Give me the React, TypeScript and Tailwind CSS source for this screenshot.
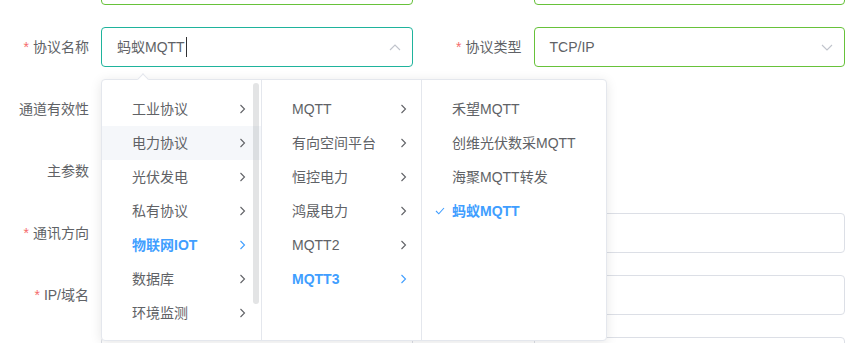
import React from 'react';

// Form with an open cascader panel (element-ui look)

const Chevron = ({ className = '' }: { className?: string }) => (
  <svg width="7" height="10" viewBox="0 0 7 10" className={className} fill="none">
    <path d="M1.5 1 L5.5 5 L1.5 9" stroke="currentColor" strokeWidth="1.1" />
  </svg>
);

const Arrow = ({ up }: { up?: boolean }) => (
  <svg width="12" height="7" viewBox="0 0 12 7" fill="none" className="text-[#c0c4cc]">
    <path d={up ? 'M1 6 L6 1 L11 6' : 'M1 1 L6 6 L11 1'} stroke="currentColor" strokeWidth="1.1" />
  </svg>
);

function Label({ text, required }: { text?: string; required?: boolean }) {
  return (
    <div className="w-[101px] shrink-0 pr-3 text-right text-sm text-[#606266]">
      {required && <span className="text-[#f56c6c] mr-1">*</span>}
      {text}
    </div>
  );
}

function Input({ border = 'border-[#dcdfe6]', children }: { border?: string; children?: React.ReactNode }) {
  return (
    <div className={`flex-1 h-10 border rounded bg-white flex items-center pl-[15px] pr-[11px] text-sm text-[#606266] ${border}`}>
      {children}
    </div>
  );
}

const col1 = ['工业协议', '电力协议', '光伏发电', '私有协议', '物联网IOT', '数据库', '环境监测'];
const col2 = ['MQTT', '有向空间平台', '恒控电力', '鸿晟电力', 'MQTT2', 'MQTT3'];
const col3 = ['禾望MQTT', '创维光伏数采MQTT', '海聚MQTT转发', '蚂蚁MQTT'];

export default function App() {
  return (
    <div className="relative w-[852px] h-[343px] overflow-hidden bg-white font-['Liberation_Sans','Noto_Sans_CJK_SC',sans-serif]">
      <div className="mt-[-35px] pr-[7px] flex flex-col gap-[22px]">
        {/* row 0 (cut off) */}
        <div className="grid grid-cols-2 gap-x-5">
          <div className="flex items-center">
            <Label />
            <Input border="border-[#67c23a]" />
          </div>
          <div className="flex items-center">
            <Label />
            <Input border="border-[#67c23a]" />
          </div>
        </div>

        <div className="grid grid-cols-2 gap-x-5">
          <div className="flex items-center">
            <Label text="协议名称" required />
            <Input border="border-[#1fb39c]">
              <span className="flex-1 flex items-center">
                蚂蚁MQTT
                <span className="inline-block w-px h-[20px] bg-[#303133] ml-px" />
              </span>
              <Arrow up />
            </Input>
          </div>
          <div className="flex items-center">
            <Label text="协议类型" required />
            <Input border="border-[#67c23a]">
              <span className="flex-1">TCP/IP</span>
              <Arrow />
            </Input>
          </div>
        </div>

        <div className="flex items-center h-10">
          <Label text="通道有效性" />
        </div>

        <div className="flex items-center h-10">
          <Label text="主参数" />
        </div>

        <div className="flex items-center">
          <Label text="通讯方向" required />
          <Input />
        </div>

        <div className="flex items-center">
          <Label text="IP/域名" required />
          <Input />
        </div>

        <div className="grid grid-cols-2 gap-x-5">
          <div className="flex items-center">
            <Label />
            <Input />
          </div>
          <div className="flex items-center">
            <Label />
            <Input />
          </div>
        </div>
      </div>

      {/* cascader dropdown */}
      <div className="absolute left-[101px] top-[79px] h-[262px] flex bg-white border border-[#e4e7ed] rounded shadow-[0_2px_12px_0_rgba(0,0,0,0.1)]">
        <div className="absolute -top-[5px] left-[37px] w-2 h-2 rotate-45 bg-white border-l border-t border-[#e4e7ed]" />

        <div className="relative w-[160px] border-r border-[#e4e7ed] pt-3 overflow-hidden">
          {col1.map((t, i) => {
            const active = i === 4;
            const hover = i === 1;
            return (
              <div
                key={t}
                className={`h-[34px] flex items-center justify-between pl-[30px] pr-[15px] text-sm ${
                  hover ? 'bg-[#f5f7fa]' : ''
                } ${active ? 'text-[#409eff] font-bold' : 'text-[#606266]'}`}
              >
                <span>{t}</span>
                <Chevron />
              </div>
            );
          })}
          <div className="absolute right-[2px] top-[3px] w-[6px] h-[221px] rounded bg-[#909399]/25" />
        </div>

        <div className="w-[160px] border-r border-[#e4e7ed] pt-3">
          {col2.map((t, i) => {
            const active = i === 5;
            return (
              <div
                key={t}
                className={`h-[34px] flex items-center justify-between pl-[30px] pr-[14px] text-sm ${
                  active ? 'text-[#409eff] font-bold' : 'text-[#606266]'
                }`}
              >
                <span>{t}</span>
                <Chevron />
              </div>
            );
          })}
        </div>

        <div className="w-[184px] pt-3">
          {col3.map((t, i) => {
            const active = i === 3;
            return (
              <div
                key={t}
                className={`relative h-[34px] flex items-center pl-[30px] pr-4 text-sm ${
                  active ? 'text-[#409eff] font-bold' : 'text-[#606266]'
                }`}
              >
                {active && (
                  <svg width="10" height="8" viewBox="0 0 10 8" fill="none" className="absolute left-[13px]">
                    <path d="M1 4 L3.8 6.8 L9 1" stroke="currentColor" strokeWidth="1.1" />
                  </svg>
                )}
                <span>{t}</span>
              </div>
            );
          })}
        </div>
      </div>
    </div>
  );
}
